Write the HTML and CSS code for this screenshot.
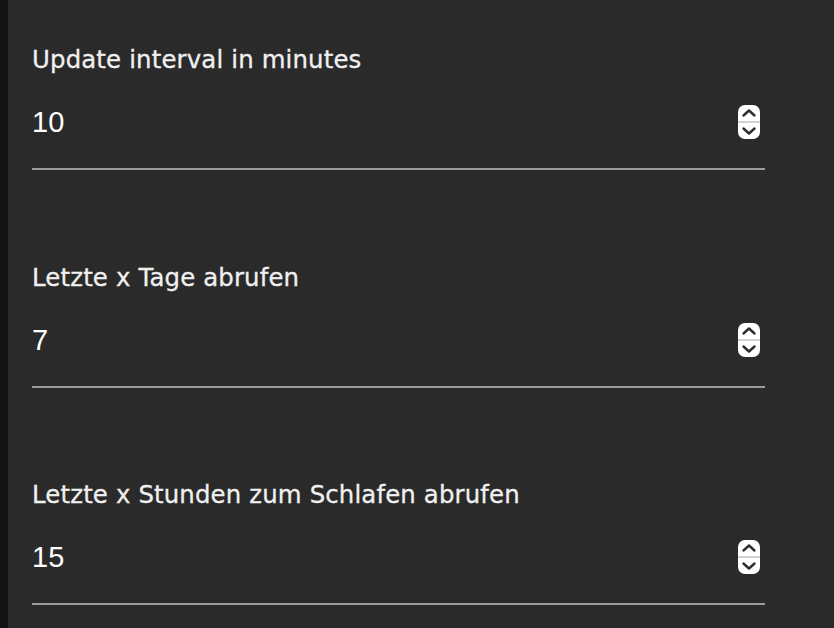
FILE: index.html
```html
<!DOCTYPE html>
<html lang="de">
<head>
  <meta charset="UTF-8" />
  <meta name="viewport" content="width=device-width, initial-scale=1.0" />
  <title>Einstellungen</title>
  <link rel="stylesheet" href="styles.css">
</head>
<body>
  <div class="strip"></div>
  <div class="settings">

    <!-- Update interval -->
    <div class="field">
      <label for="interval">Update interval in minutes</label>
      <div class="input-row">
        <input type="text" id="interval" value="10" />
        <svg class="spinner" width="22" height="34" viewBox="0 0 22 34">
          <rect x="0" y="0" width="22" height="34" rx="7" fill="#ffffff"/>
          <rect x="0" y="16" width="22" height="2" fill="#d2d2d2"/>
          <path d="M5.5 10.5 L11 5.5 L16.5 10.5" fill="none" stroke="#2e2e2e" stroke-width="2.4" stroke-linecap="round" stroke-linejoin="round"/>
          <path d="M5.5 23.5 L11 28.5 L16.5 23.5" fill="none" stroke="#2e2e2e" stroke-width="2.4" stroke-linecap="round" stroke-linejoin="round"/>
        </svg>
      </div>
    </div>

    <!-- Days -->
    <div class="field">
      <label for="days">Letzte x Tage abrufen</label>
      <div class="input-row">
        <input type="text" id="days" value="7" />
        <svg class="spinner" width="22" height="34" viewBox="0 0 22 34">
          <rect x="0" y="0" width="22" height="34" rx="7" fill="#ffffff"/>
          <rect x="0" y="16" width="22" height="2" fill="#d2d2d2"/>
          <path d="M5.5 10.5 L11 5.5 L16.5 10.5" fill="none" stroke="#2e2e2e" stroke-width="2.4" stroke-linecap="round" stroke-linejoin="round"/>
          <path d="M5.5 23.5 L11 28.5 L16.5 23.5" fill="none" stroke="#2e2e2e" stroke-width="2.4" stroke-linecap="round" stroke-linejoin="round"/>
        </svg>
      </div>
    </div>

    <!-- Sleep hours -->
    <div class="field">
      <label for="sleep">Letzte x Stunden zum Schlafen abrufen</label>
      <div class="input-row">
        <input type="text" id="sleep" value="15" />
        <svg class="spinner" width="22" height="34" viewBox="0 0 22 34">
          <rect x="0" y="0" width="22" height="34" rx="7" fill="#ffffff"/>
          <rect x="0" y="16" width="22" height="2" fill="#d2d2d2"/>
          <path d="M5.5 10.5 L11 5.5 L16.5 10.5" fill="none" stroke="#2e2e2e" stroke-width="2.4" stroke-linecap="round" stroke-linejoin="round"/>
          <path d="M5.5 23.5 L11 28.5 L16.5 23.5" fill="none" stroke="#2e2e2e" stroke-width="2.4" stroke-linecap="round" stroke-linejoin="round"/>
        </svg>
      </div>
    </div>

  </div>
</body>
</html>
```

FILE: styles.css
```css
html, body {
  height: 100%;
}
body {
  margin: 0;
  display: flex;
  background: #2a2a2a;
  color: #f2f2f2;
  overflow: hidden;
}
.strip {
  width: 8px;
  flex-shrink: 0;
  background: #131313;
}
.settings {
  padding: 45px 0 0 24px;
  width: 733px;
}
.field {
  margin-bottom: 92.5px;
}
label {
  display: block;
  font-family: "DejaVu Sans", sans-serif;
  font-size: 24.4px;
  line-height: 30px;
  letter-spacing: 0.15px;
  color: #f0f0f0;
  -webkit-text-stroke: 0.3px #f0f0f0;
  margin-bottom: 30px;
}
.input-row {
  display: flex;
  align-items: center;
  padding-bottom: 29px;
  border-bottom: 2px solid #9b9b9b;
}
input {
  flex: 1;
  min-width: 0;
  margin: 0;
  padding: 0;
  border: none;
  outline: none;
  background: transparent;
  color: #ffffff;
  font-family: "Liberation Sans", Arial, sans-serif;
  font-size: 29px;
  line-height: 34px;
  height: 34px;
}
.spinner {
  display: block;
  flex-shrink: 0;
  margin-right: 5px;
}
```
